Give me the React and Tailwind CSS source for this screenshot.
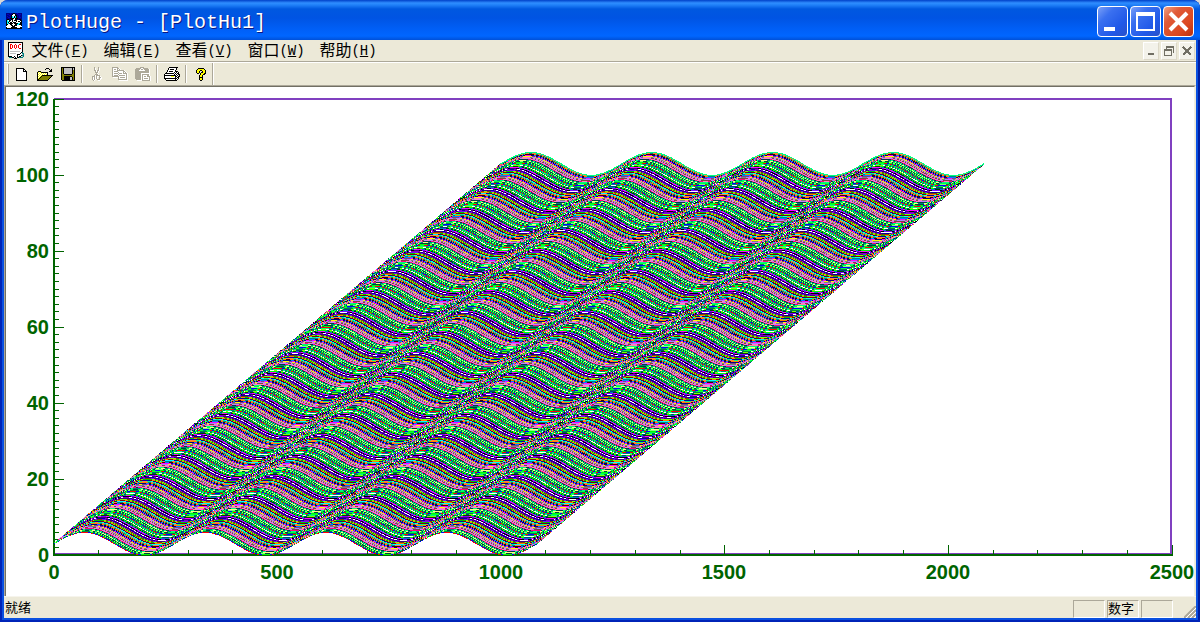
import { useMemo } from 'react'

const INK = {
  k: '#000000', w: '#ffffff', y: '#ffff00', o: '#808000', g: '#aca899', s: '#c0c0c0',
  r: '#ff0000', b: '#000080', c: '#00ffff', t: '#008080', m: '#716f64', u: '#0000c0',
}

const ICONS = {
  app: [
    'bbbbubbkkbbubbbb',
    'buubbbkwwkbbuuub',
    'bbbubkwwwkkbbubb',
    'bubbbkcwkckbbubb',
    'bbuubkcckckbbuub',
    'bbbbkkkkwkkkbbbb',
    'bkkbbkkwwkkbbkkb',
    'kcwkkwkwkkkwwwkk',
    'kcckwwkwwwkwkkwk',
    'kckwkkwkkkwwwwkk',
    'kcckkkkwkkkkcckk',
    'kkwwkkwwwkkcckkk',
    'kwwwwkkwkkkwwwwk',
    'wwwwwwkkkwwwwwww',
    'kwwwwkkkkkkwwwkk',
    'kkkkkkkkkkkkkkkk',
  ],
  doc: [
    'kkkkkkkkkkkkkkk.',
    'kwwwwwwwwwwwwwk.',
    'kwrrwwwrwwwrrwk.',
    'kwrwrwrwrwrwwwk.',
    'kwrwrwrwrwrwwwk.',
    'kwrwrwrwrwrwwwk.',
    'kwrrwwwrwwwrrwk.',
    'kwwwwwwwwwwwwwk.',
    'kwwwwwwwwwwwwwk.',
    'kwsssssssssswwk.',
    'kwwwwwwwwwwwwkt.',
    'kwsssssswwwwkwtt',
    'kwwwwwwwwkkkwwst',
    'kwwwwwwwwkwwwktt',
    'kkkkwwkwwkwkk.st',
    '.tttkkwkwkktttt.',
    '......kkk.......',
  ],
  novo: [
    'kkkkkkkk...',
    'kwwwwwwkk..',
    'kwwwwwwkwk.',
    'kwwwwwwkkkk',
    'kwwwwwwwwwk',
    'kwwwwwwwwwk',
    'kwwwwwwwwwk',
    'kwwwwwwwwwk',
    'kwwwwwwwwwk',
    'kwwwwwwwwwk',
    'kwwwwwwwwwk',
    'kwwwwwwwwwk',
    'kkkkkkkkkkk',
  ],
  open: [
    '.........kkk....',
    '........k...k.k.',
    '.............kk.',
    '.kkk........kkk.',
    'kywykkkkkkk.....',
    'kwywywywywk.....',
    'kywywywywyk.....',
    'kwywykkkkkkkkkkk',
    'kywykoooooooook.',
    'kwykoooooooook..',
    'kykoooooooook...',
    'kkoooooooook....',
    'kkkkkkkkkkk.....',
  ],
  save: [
    'kkkkkkkkkkkkkk',
    'kokssssssssksk',
    'kokssssssssksk',
    'koksssssssskok',
    'koksssssssskok',
    'koksssssssskok',
    'koksssssssskok',
    'kookkkkkkkkook',
    'kooooooooooook',
    'kookkkkkkkkook',
    'kookkkkkksskok',
    'kookkkkkksskok',
    'kookkkkkksskok',
    '.kkkkkkkkkkkkk',
  ],
  cut: [
    '..g...g...',
    '..gw..gw..',
    '..gw..gw..',
    '..ggwggw..',
    '...gwgw...',
    '...gggw...',
    '....gw....',
    '...gggw...',
    '..gwgggg..',
    'gggwgwwgw.',
    'gwgwgw.ggw',
    'gwgwgw.gww',
    'gwgw.gggw.',
    '.gw...ww..',
  ],
  copy: [
    'gggggg..........',
    'gwwwwggw........',
    'gwggwgwgw.......',
    'gwwwwgggggggw...',
    'gwggggwwwwwggw..',
    'gwwwwwgwwwwgwgw.',
    'gwggggwgggwggggw',
    'gwwwwwgwwwwwwwgw',
    'gwggggwggggggwgw',
    'gggggggwwwwwwwgw',
    '.wwwwwgwgggggwgw',
    '......gwwwwwwwgw',
    '......gggggggggw',
    '.......wwwwwwwww',
  ],
  paste: [
    '.....gggg.......',
    '.gggggwwggggg...',
    'gggggwggwgggggw.',
    'ggggwwwwwwggggw.',
    'ggggggggggggggw.',
    'ggggggggggggggw.',
    'ggggggwwwwwwwww.',
    'ggggggwgggggggw.',
    'ggggggwgwwwwggw.',
    'ggggggwgwggwgggw',
    'ggggggwgwwwwwwgw',
    'ggggggwgwggggwgw',
    '.gggggwgwwwwwwgw',
    '..wwwwwggggggggw',
  ],
  print: [
    '.....kkkkkkkkk..',
    '....kwwwwwwwk...',
    '....kwkkkkwwk...',
    '...kwwwwwwwk....',
    '...kwkkkkwwkkk..',
    '..kwwwwwwwkwkwk.',
    '.kkkkkkkkkwkwkk.',
    'kwwwwwwwwwkwkwkk',
    'kkkkkkkkkkkkwkwk',
    'kwwwwwwyyywkkwkk',
    'kwwwwwwwwwwkwkk.',
    'kkkkkkkkkkkkkwk.',
    '.kwwwwwwwwwkwk..',
    '..kkkkkkkkkkk...',
  ],
  help: [
    '..kkkkkk..',
    '.kyyyyyyk.',
    'kyyykkyyyk',
    'kyyk..kyyk',
    'kyyk.kkyyk',
    '.kk.kyyykk',
    '....kyykk.',
    '...kyyk...',
    '...kyyk...',
    '...kkkk...',
    '...kyyk...',
    '...kyyk...',
    '....kk....',
  ],
}

function PixelIcon({ name }) {
  const rows = ICONS[name]
  const w = rows[0].length
  return (
    <svg width={w} height={rows.length} viewBox={`0 0 ${w} ${rows.length}`} className="shrink-0" shapeRendering="crispEdges" aria-hidden="true">
      {rows.flatMap((row, y) =>
        [...row].map((ch, x) => INK[ch] && <rect key={`${x}-${y}`} x={x} y={y} width="1" height="1" fill={INK[ch]} />)
      )}
    </svg>
  )
}

const MENUS = [
  ['文件', 'F'],
  ['编辑', 'E'],
  ['查看', 'V'],
  ['窗口', 'W'],
  ['帮助', 'H'],
]

const TOOLS = [
  [['novo', '新建'], ['open', '打开'], ['save', '保存']],
  [['cut', '剪切', true], ['copy', '复制', true], ['paste', '粘贴', true]],
  [['print', '打印']],
  [['help', '关于']],
]

// Pen colours, cycled over the series
const PENS = [
  '#ff0000', '#0000ff', '#00ff00', '#008040', '#80ff80', '#004040', '#00ff40', '#ffff80', '#008080',
  '#00ff80', '#004040', '#ff0080', '#ff80c0', '#c080ff', '#804040', '#ff80c0', '#808080', '#b080ff',
  '#ffff00', '#804080', '#ff00ff', '#000080', '#0080ff', '#400000', '#ff8000', '#008080', '#ff8040',
  '#00ff80', '#00ffff', '#0000a0', '#800000', '#ff8000', '#00c000', '#80ff00', '#804000', '#8000ff',
  '#400080', '#0000a0', '#8000c0', '#ffffff', '#400080', '#000000', '#8000ff', '#ff00ff', '#0080c0',
  '#004000', '#00ff00', '#004080', '#80ff00', '#ffffff', '#008040', '#00ff80', '#008080', '#00ff40',
]

const SERIES = 1000
const POINTS = 1080

const toX = (v) => 54 + (v * 1118) / 2500
const toY = (v) => 555 - v * 3.8

function seriesPath(i) {
  let d = ''
  let start = null
  let lastX = 0
  let lastY = 0
  for (let j = 0; j <= POINTS; j++) {
    const x = Math.floor(toX(i + j))
    const y = Math.floor(toY(3 + i * 0.1 + 3 * Math.sin((j * Math.PI) / 135)))
    if (start === null) {
      start = x
    } else if (y !== lastY) {
      d += `M${start} ${lastY}.5H${lastX + 1}`
      start = x
    }
    lastX = x
    lastY = y
  }
  return d + `M${start} ${lastY}.5H${lastX + 1}`
}

const range = (n, step) => Array.from({ length: n }, (_, i) => i * step)

function Chart() {
  const series = useMemo(() => range(SERIES, 1).map(seriesPath), [])

  return (
    <svg viewBox="6 87 1188 509" className="block w-full h-auto" role="img" aria-label="PlotHu1">
      <g shapeRendering="crispEdges">
        <path d="M54 99H1171V554" fill="none" stroke="#8040c0" strokeWidth="2" />
        <path d="M54 553.5H1171" stroke="#8040c0" />
        <path d="M54 99V555H1173" fill="none" stroke="#006400" strokeWidth="2" />
        {range(61, 2).map((v) => (
          <path key={v} d={`M54 ${Math.floor(toY(v))}.5H${v % 20 === 0 ? 64 : 59}`} stroke="#006400" />
        ))}
        {range(26, 100).map((v) => (
          <path key={v} d={`M${Math.floor(toX(v))}.5 556V${v % 500 === 0 ? 545 : 550}`} stroke="#006400" />
        ))}
        {series.map((d, i) => (
          <path key={i} d={d} stroke={PENS[i % PENS.length]} />
        ))}
      </g>
      <g className="text-[20px] font-bold" fill="#006400" fontFamily="Liberation Sans, Arial, sans-serif">
        {range(7, 20).map((v) => (
          <text key={v} x="49" y={Math.round(toY(v)) + 7} textAnchor="end">{v}</text>
        ))}
        {range(6, 500).map((v) => (
          <text key={v} x={Math.floor(toX(v))} y="579" textAnchor="middle">{v}</text>
        ))}
      </g>
    </svg>
  )
}

const caption = 'w-[31px] h-[31px] rounded border border-white flex items-center justify-center'
const child = 'w-4 h-[18px] bg-[#f3f2ea] border border-r-[#dcd8c8] border-b-[#dcd8c8] border-t-white border-l-white flex items-center justify-center'

export default function App() {
  return (
    <div className="bg-[#d8d8d8]">
      <div className="min-h-screen flex flex-col rounded-t-lg overflow-hidden px-1 pb-1 bg-[#0a50e0] shadow-[inset_2px_-2px_0_#0024b8,inset_-2px_0_0_#001ea0] font-['Liberation_Sans','Noto_Sans_CJK_SC',sans-serif] text-black">
        {/* Title bar */}
        <header className="h-10 -mx-1 px-1.5 flex items-center bg-[linear-gradient(#0040c8_0px,#2f8dff_3px,#2080f8_5px,#0058e0_9px,#0054e3_18px,#0060f8_30px,#0066ff_36px,#0050d8_40px)]">
          <span className="mt-0.5"><PixelIcon name="app" /></span>
          <h1 className="ml-1 mt-1.5 flex-1 text-xl leading-7 text-white whitespace-pre font-['Liberation_Mono',monospace] [text-shadow:1px_1px_0_#0a1883]">PlotHuge - [PlotHu1]</h1>
          <div className="flex gap-[2px] mt-[3px]">
            <button aria-label="最小化" className={`${caption} bg-[linear-gradient(135deg,#7ba0f8,#3a70f0_30%,#2058e8_70%,#2a50c8)]`}>
              <svg width="29" height="29" aria-hidden="true"><path d="M6 20h11v4H6z" fill="#fff" /></svg>
            </button>
            <button aria-label="最大化" className={`${caption} bg-[linear-gradient(135deg,#7ba0f8,#3a70f0_30%,#2058e8_70%,#2a50c8)]`}>
              <svg width="29" height="29" aria-hidden="true"><path d="M5 5h19v19H5zM7 9v13h15V9z" fill="#fff" fillRule="evenodd" /></svg>
            </button>
            <button aria-label="关闭" className={`${caption} bg-[linear-gradient(135deg,#f0a080,#e05a38_30%,#dc4820_70%,#b83010)]`}>
              <svg width="29" height="29" aria-hidden="true"><path d="M6 6L23 23M23 6L6 23" stroke="#fff" strokeWidth="4" /></svg>
            </button>
          </div>
        </header>

        {/* Menu */}
        <nav className="h-[22px] flex items-center bg-[#ece9d8] pl-1 border-b border-[#aca899]">
          <PixelIcon name="doc" />
          <div className="flex flex-1">
            {MENUS.map(([label, key]) => (
              <button key={key} className="w-[72px] flex items-center justify-center text-base leading-5">
                {label}
                <span className="font-['Liberation_Mono',monospace] text-sm">(<u>{key}</u>)</span>
              </button>
            ))}
          </div>
          <div className="flex gap-[2px] pr-px">
            <button aria-label="最小化子窗口" className={child}>
              <svg width="14" height="16" shapeRendering="crispEdges" aria-hidden="true"><path d="M4 10h6v2H4z" fill="#716f64" /></svg>
            </button>
            <button aria-label="还原子窗口" className={child}>
              <svg width="14" height="16" shapeRendering="crispEdges" fill="#716f64" aria-hidden="true">
                <path d="M4 3h8v7h-1V5H5v1H4zM2 6h8v7H2zM3 8v4h6V8z" fillRule="evenodd" />
              </svg>
            </button>
            <button aria-label="关闭子窗口" className={child}>
              <svg width="14" height="16" shapeRendering="crispEdges" aria-hidden="true"><path d="M3 4l8 8M11 4l-8 8" stroke="#716f64" strokeWidth="2" /></svg>
            </button>
          </div>
        </nav>

        {/* Toolbar */}
        <div role="toolbar" className="h-[23px] flex items-center bg-[#ece9d8] border-t border-white pl-1">
          <span className="w-px h-5 mr-px bg-[#aca899] shadow-[-1px_0_0_#ffffff]" />
          {TOOLS.map((group, i) => (
            <div key={i} className="flex items-center">
              {i > 0 && <span className="w-px h-[18px] ml-[2px] mr-[3px] bg-[#aca899] shadow-[1px_0_0_#ffffff]" />}
              {group.map(([name, label, disabled]) => (
                <button key={name} aria-label={label} disabled={disabled} className="w-[23px] h-[22px] flex items-center justify-center">
                  <PixelIcon name={name} />
                </button>
              ))}
            </div>
          ))}
          <span className="w-px h-[22px] bg-[#aca899] shadow-[1px_0_0_#ffffff]" />
        </div>

        <main className="flex-1 bg-white border-t border-l border-t-[#aca899] border-l-[#aca899] border-r border-r-[#ece9d8]">
          <div className="border-t border-l border-[#716f64] border-r border-r-[#f1efe2]">
            <Chart />
          </div>
        </main>

        {/* Status bar */}
        <footer className="h-[22px] flex items-center bg-[#ece9d8] border-t border-[#f6f4ec] text-[13px] leading-4 pl-px">
          <span className="flex-1">就绪</span>
          <div className="flex gap-[2px] mt-[2px]">
            {['', '数字', ''].map((text, i) => (
              <span key={i} className="w-8 h-[18px] border border-t-[#aca899] border-l-[#aca899] border-b-white border-r-white">{text}</span>
            ))}
          </div>
          <svg width="12" height="12" className="ml-[11px] self-end" aria-hidden="true">
            <path d="M0 12L12 0M4 12L12 4M8 12L12 8" stroke="#aca899" strokeWidth="2" />
            <path d="M2 12L12 2M6 12L12 6M10 12L12 10" stroke="#fff" />
          </svg>
        </footer>
      </div>
    </div>
  )
}
